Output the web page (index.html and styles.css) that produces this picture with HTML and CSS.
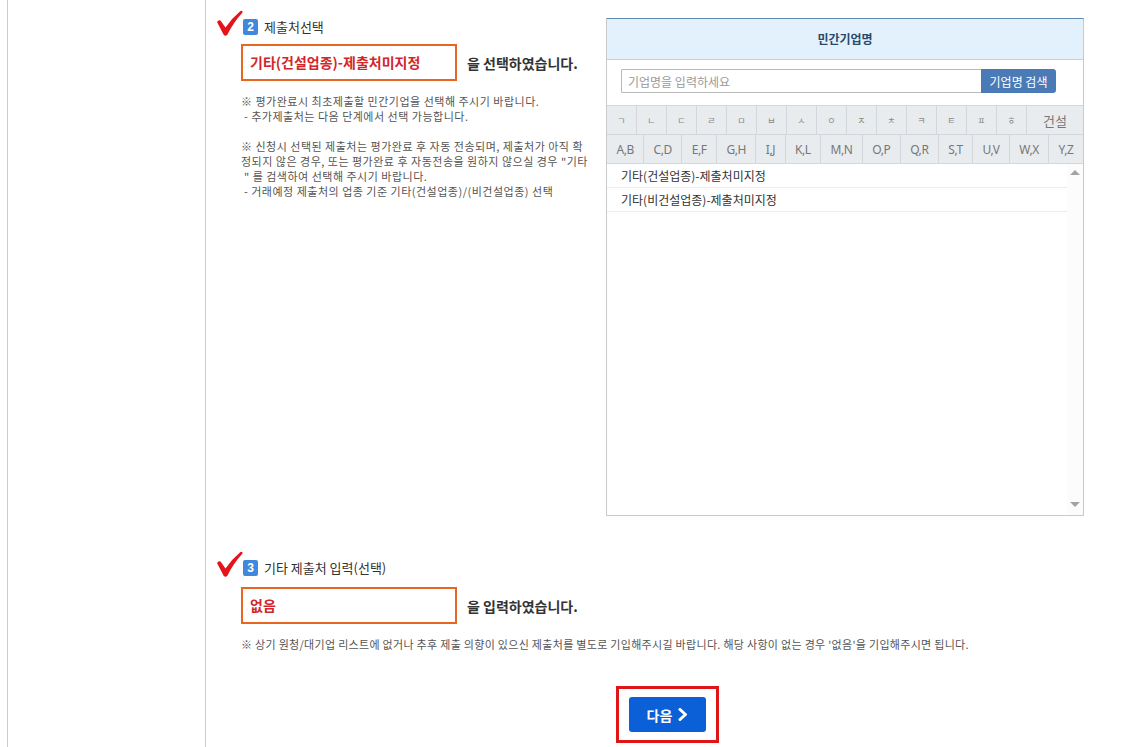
FILE: index.html
```html
<!DOCTYPE html>
<html>
<head>
  <meta charset="utf-8">
  <title>제출처선택</title>
  <link rel="stylesheet" href="styles.css">
</head>
<body>
  <div class="page">
    <div class="sidebar"></div>

    <div class="main">
      <!-- 2. 제출처선택 -->
      <div class="sec sec-select">
        <div class="sec-left">
          <div class="step-title">
            <svg class="check" width="26" height="27" viewBox="0 0 26 27"><path d="M0,12 Q1.5,9.5 3.5,10.5 L8.5,17.5 Q15,8 23.5,1 Q26,0 25.5,2.5 Q16,13 10.5,24.5 Q8.5,27 6.5,24.5 Z" fill="#e3141b"/></svg>
            <span class="badge">2</span>
            <span class="step-name">제출처선택</span>
          </div>
          <div class="result-row">
            <div class="result-box">기타(건설업종)-제출처미지정</div>
            <span class="result-msg">을 선택하였습니다.</span>
          </div>
          <div class="notes">
            <p>※ 평가완료시 최초제출할 민간기업을 선택해 주시기 바랍니다.<br>&nbsp;- 추가제출처는 다음 단계에서 선택 가능합니다.</p>
            <p>※ 신청시 선택된 제출처는 평가완료 후 자동 전송되며, 제출처가 아직 확<br>정되지 않은 경우, 또는 평가완료 후 자동전송을 원하지 않으실 경우 "기타<br>&nbsp;" 를 검색하여 선택해 주시기 바랍니다.<br>&nbsp;- 거래예정 제출처의 업종 기준 기타(건설업종)/(비건설업종) 선택</p>
          </div>
        </div>

        <div class="company-panel">
          <div class="panel-head">민간기업명</div>
          <div class="search-row">
            <input class="search-input" type="text" placeholder="기업명을 입력하세요">
            <button class="search-btn">기업명 검색</button>
          </div>
          <div class="idx-row idx-kor">
            <span>ㄱ</span><span>ㄴ</span><span>ㄷ</span><span>ㄹ</span><span>ㅁ</span><span>ㅂ</span><span>ㅅ</span><span>ㅇ</span><span>ㅈ</span><span>ㅊ</span><span>ㅋ</span><span>ㅌ</span><span>ㅍ</span><span>ㅎ</span><span class="idx-wide">건설</span>
          </div>
          <div class="idx-row idx-eng">
            <span>A,B</span><span>C,D</span><span>E,F</span><span>G,H</span><span>I,J</span><span>K,L</span><span>M,N</span><span>O,P</span><span>Q,R</span><span>S,T</span><span>U,V</span><span>W,X</span><span>Y,Z</span>
          </div>
          <div class="list-wrap">
            <ul class="company-list">
              <li>기타(건설업종)-제출처미지정</li>
              <li>기타(비건설업종)-제출처미지정</li>
            </ul>
            <div class="fake-scroll">
              <span class="arrow-up"></span>
              <span class="arrow-down"></span>
            </div>
          </div>
        </div>
      </div>

      <!-- 3. 기타 제출처 입력 -->
      <div class="sec sec-etc">
        <div class="step-title">
          <svg class="check" width="26" height="27" viewBox="0 0 26 27"><path d="M0,12 Q1.5,9.5 3.5,10.5 L8.5,17.5 Q15,8 23.5,1 Q26,0 25.5,2.5 Q16,13 10.5,24.5 Q8.5,27 6.5,24.5 Z" fill="#e3141b"/></svg>
          <span class="badge">3</span>
          <span class="step-name">기타 제출처 입력(선택)</span>
        </div>
        <div class="result-row">
          <div class="result-box">없음</div>
          <span class="result-msg">을 입력하였습니다.</span>
        </div>
        <div class="notes notes-one">
          <p>※ 상기 원청/대기업 리스트에 없거나 추후 제출 의향이 있으신 제출처를 별도로 기입해주시길 바랍니다. 해당 사항이 없는 경우 '없음'을 기입해주시면 됩니다.</p>
        </div>
      </div>

      <div class="btn-area">
        <div class="btn-frame">
          <button class="btn-next">다음 <svg width="10" height="13" viewBox="0 0 10 13"><path d="M2,1.5 L7.5,6.5 L2,11.5" fill="none" stroke="#fff" stroke-width="3" stroke-linecap="round" stroke-linejoin="round"/></svg></button>
        </div>
      </div>
    </div>
  </div>
</body>
</html>
```

FILE: styles.css
```css
  body {
    margin: 0;
    font-family: "Noto Sans CJK KR", "Noto Sans", sans-serif;
    color: #333;
    background: #fff;
  }

  .page {
    display: flex;
    min-height: 747px;
  }

  /* Left menu column (empty) */
  .sidebar {
    margin-left: 7px;
    width: 197px;
    border-left: 1px solid #cbcbcb;
    border-right: 1px solid #cbcbcb;
  }

  .main {
    flex: 1;
    padding: 0 38px 0 35px;
  }

  /* Section 2 */
  .sec-select {
    display: flex;
    justify-content: space-between;
    padding-top: 10px;
  }

  .sec-left {
    flex: 1;
  }

  .step-title {
    display: flex;
    align-items: flex-end;
    margin-left: -24px;
    height: 27px;
  }

  .check {
    display: block;
  }

  .badge {
    width: 15px;
    height: 16px;
    margin-bottom: 2px;
    border-radius: 2px;
    background: #3f88dd;
    color: #fff;
    font-size: 12px;
    font-weight: 700;
    line-height: 16px;
    text-align: center;
    font-family: "Liberation Sans", sans-serif;
  }

  .step-name {
    margin-left: 6px;
    margin-bottom: 2px;
    font-size: 13px;
    line-height: 16px;
    color: #333;
  }

  .result-row {
    display: flex;
    align-items: center;
    margin-top: 7px;
  }

  .result-box {
    box-sizing: border-box;
    width: 216px;
    height: 37px;
    border: 2px solid #e8661f;
    padding-left: 7px;
    font-size: 14px;
    font-weight: 700;
    line-height: 33px;
    color: #d3262c;
  }

  .result-msg {
    margin-left: 10px;
    font-size: 14px;
    font-weight: 700;
    color: #333;
  }

  .notes {
    margin-top: 13px;
    font-size: 11px;
    line-height: 15px;
    color: #555;
    letter-spacing: 0.5px;
  }

  .notes p {
    margin: 0 0 15px;
  }

  /* Company search panel */
  .company-panel {
    width: 478px;
    box-sizing: border-box;
    margin-top: 8px;
    border: 1px solid #c9c9c9;
    border-top: 1px solid #5f8bb2;
  }

  .panel-head {
    height: 40px;
    line-height: 40px;
    background: #e3f1fc;
    border-bottom: 1px solid #cfcfcf;
    text-align: center;
    font-size: 12px;
    font-weight: 700;
    color: #2a4a6c;
  }

  .search-row {
    display: flex;
    padding: 9px 27px 12px 14px;
  }

  .search-input {
    flex: 1;
    height: 24px;
    box-sizing: border-box;
    border: 1px solid #b9b9b9;
    border-right: none;
    border-radius: 2px 0 0 2px;
    padding: 0 6px;
    font-family: inherit;
    font-size: 12px;
    outline: none;
  }

  .search-input::placeholder {
    color: #9a9a9a;
  }

  .search-btn {
    width: 75px;
    height: 24px;
    border: none;
    border-radius: 0 3px 3px 0;
    background: #4a7bb6;
    color: #fff;
    font-family: inherit;
    font-size: 12px;
    padding: 0;
    cursor: pointer;
  }

  .idx-row {
    display: flex;
    height: 28px;
    background: #e9ecef;
    border-top: 1px solid #d3d7db;
  }

  .idx-row span {
    display: flex;
    align-items: center;
    justify-content: center;
    border-right: 1px solid #d3d7db;
    box-sizing: border-box;
    cursor: pointer;
  }

  .idx-row span:last-child {
    border-right: none;
  }

  .idx-kor span {
    width: 30px;
    font-size: 9px;
    color: #888;
  }

  .idx-kor .idx-wide {
    width: auto;
    flex: 1;
    font-size: 13px;
    color: #777;
  }

  .idx-eng span {
    flex: 1 1 auto;
    font-size: 12px;
    color: #777;
    font-family: "Noto Sans", sans-serif;
    letter-spacing: -0.4px;
  }

  .list-wrap {
    display: flex;
    height: 351px;
    border-top: 1px solid #d3d7db;
  }

  .company-list {
    flex: 1;
    margin: 0;
    padding: 0;
    list-style: none;
  }

  .company-list li {
    height: 23px;
    line-height: 23px;
    padding-left: 14px;
    border-bottom: 1px solid #ececec;
    font-size: 12px;
    color: #333;
  }

  .fake-scroll {
    width: 16px;
    display: flex;
    flex-direction: column;
    justify-content: space-between;
    align-items: center;
    padding: 6px 0 8px;
    background: #fcfcfc;
  }

  .arrow-up {
    width: 0;
    height: 0;
    border-left: 5px solid transparent;
    border-right: 5px solid transparent;
    border-bottom: 5px solid #a3a3a3;
  }

  .arrow-down {
    width: 0;
    height: 0;
    border-left: 5px solid transparent;
    border-right: 5px solid transparent;
    border-top: 5px solid #a3a3a3;
  }

  /* Section 3 */
  .sec-etc {
    margin-top: 35px;
  }

  .sec-etc .result-row {
    margin-top: 9px;
  }

  .notes-one {
    letter-spacing: 0.3px;
  }

  .notes-one p {
    margin: 0;
  }

  /* Next button */
  .btn-area {
    display: flex;
    justify-content: center;
    padding-left: 10px;
    margin-top: 34px;
  }

  .btn-frame {
    border: 3px solid #e01515;
    padding: 8px 10px;
  }

  .btn-next {
    display: flex;
    align-items: center;
    justify-content: center;
    gap: 6px;
    width: 77px;
    height: 35px;
    border: none;
    border-radius: 3px;
    background: #0b5fd7;
    color: #fff;
    font-family: inherit;
    font-size: 14px;
    font-weight: 700;
    cursor: pointer;
  }
```
